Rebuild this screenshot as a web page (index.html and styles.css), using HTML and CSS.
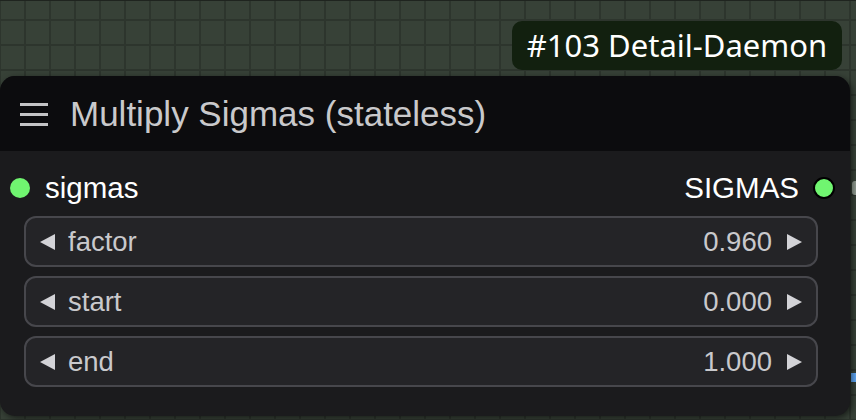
FILE: index.html
```html
<!DOCTYPE html>
<html>
<head>
<meta charset="utf-8">
<link rel="stylesheet" href="styles.css">
</head>
<body>
<div class="canvas">
  <span class="link link-blue"></span>
  <span class="link link-grey"></span>
  <div class="badge-row"><div class="badge">#103 Detail-Daemon</div></div>
  <div class="node">
    <div class="node-title">
      <svg class="menu" width="28" height="24" viewBox="0 0 28 24"><rect x="0" y="1" width="28" height="3" fill="#c4c4c6"/><rect x="0" y="11" width="28" height="3" fill="#c4c4c6"/><rect x="0" y="21" width="28" height="3" fill="#c4c4c6"/></svg>
      <span class="title-text">Multiply Sigmas (stateless)</span>
    </div>
    <div class="node-body">
      <div class="slots">
        <div class="slot slot-in"><span class="dot"></span><span>sigmas</span></div>
        <div class="slot slot-out"><span>SIGMAS</span><span class="dot dot-out"></span></div>
      </div>
      <div class="widgets">
        <div class="widget"><span class="arrow arrow-left"></span><span class="label">factor</span><span class="value">0.960</span><span class="arrow arrow-right"></span></div>
        <div class="widget"><span class="arrow arrow-left"></span><span class="label">start</span><span class="value">0.000</span><span class="arrow arrow-right"></span></div>
        <div class="widget"><span class="arrow arrow-left"></span><span class="label">end</span><span class="value">1.000</span><span class="arrow arrow-right"></span></div>
      </div>
    </div>
  </div>
</div>
</body>
</html>
```
FILE: styles.css
```css
html, body {
  margin: 0;
  padding: 0;
  width: 856px;
  height: 420px;
  overflow: hidden;
}
body {
  background-color: #374137;
  background-image:
    linear-gradient(to right, #2d352d 2px, transparent 2px),
    linear-gradient(to bottom, #2d352d 2px, transparent 2px);
  background-size: 25px 25px;
  background-position: 24px 19px;
  border-top: 1px solid #1f241f;
  box-sizing: border-box;
  font-family: "Liberation Sans", Arial, sans-serif;
}
.canvas {
  position: relative;
  display: flex;
  flex-direction: column;
  height: 100%;
}
.link {
  position: absolute;
  display: block;
}
.link-blue {
  left: 851px;
  top: 372px;
  width: 6px;
  height: 9px;
  background: #5ea6f2;
}
.link-grey {
  left: 852px;
  top: 180px;
  width: 6px;
  height: 14px;
  background: #8f9a8f;
  border-radius: 3px 0 0 3px;
}
.badge-row {
  display: flex;
  justify-content: flex-end;
  padding: 20px 14px 0 0;
}
.badge {
  height: 49px;
  width: 330px;
  box-sizing: border-box;
  background: #12200f;
  border-radius: 10px;
  color: #ffffff;
  font-family: "Noto Sans", "Open Sans", sans-serif;
  font-size: 31px;
  line-height: 48px;
  text-align: center;
}
.node {
  position: relative;
  margin-top: 6px;
  width: 850px;
  height: 340px;
  border-radius: 15px;
  overflow: hidden;
  background: #1b1b1d;
  box-shadow: 2px 2px 6px rgba(0, 0, 0, 0.55);
  display: flex;
  flex-direction: column;
}
.node-title {
  height: 75px;
  flex: none;
  background: #0c0c0e;
  display: flex;
  align-items: center;
  padding-left: 20px;
  gap: 22px;
}
.menu {
  display: block;
  margin-top: 1px;
}
.title-text {
  color: #c9c9cb;
  font-size: 35px;
}
.node-body {
  flex: 1;
  display: flex;
  flex-direction: column;
}
.slots {
  height: 65px;
  box-sizing: border-box;
  padding: 9px 15px 0 10px;
  display: flex;
  justify-content: space-between;
  align-items: flex-start;
}
.slot {
  height: 56px;
  display: flex;
  align-items: center;
  color: #ffffff;
  font-size: 29.5px;
}
.slot-in { gap: 15px; }
.slot-out { gap: 14px; }
.dot {
  width: 20px;
  height: 20px;
  border-radius: 50%;
  background: #70f570;
}
.dot-out {
  width: 18px;
  height: 18px;
  border: 2px solid #000000;
}
.widgets {
  display: flex;
  flex-direction: column;
  gap: 9px;
  padding: 0 32px 0 24px;
}
.widget {
  height: 51px;
  box-sizing: border-box;
  border: 2px solid #47474c;
  border-radius: 12px;
  background: #242427;
  display: flex;
  align-items: center;
  padding: 0 14px;
  color: #c9c9cc;
  font-size: 27.5px;
}
.label {
  margin-left: 13px;
  flex: 1;
}
.value {
  margin-right: 15px;
}
.arrow {
  width: 0;
  height: 0;
  border-top: 8px solid transparent;
  border-bottom: 8px solid transparent;
}
.arrow-left {
  border-right: 15px solid #d3d3d7;
}
.arrow-right {
  border-left: 15px solid #d3d3d7;
}
```
